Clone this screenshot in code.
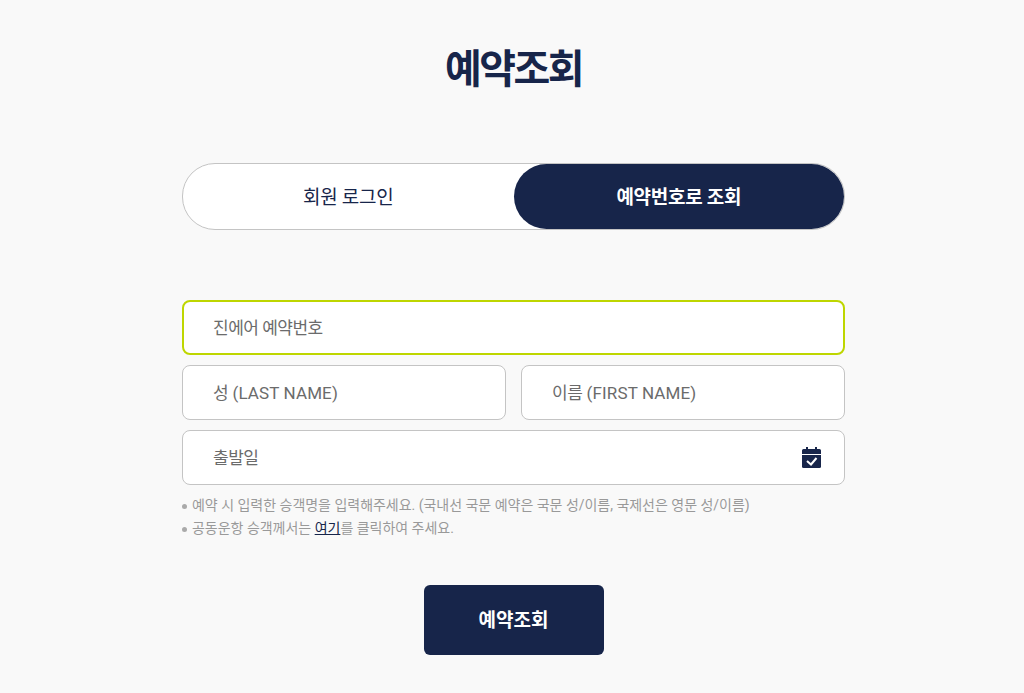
<script>
</script>

<main class="page">
  <h1>예약조회</h1>
  <div class="tabs">
    <button class="tab">회원 로그인</button>
    <button class="tab on">예약번호로 조회</button>
  </div>
  <form class="form">
    <div class="field focus"><span class="ko">진에어 예약번호</span></div>
    <div class="row">
      <div class="field"><span class="en"><span class="ko">성</span> (LAST NAME)</span></div>
      <div class="field"><span class="en"><span class="ko">이름</span> (FIRST NAME)</span></div>
    </div>
    <div class="field date">
      <span class="ko">출발일</span>
      <svg width="19" height="21" viewBox="0 0 19 21">
        <path fill="#17254a" d="M4 0h2v2h7V0h2v2h2.500A1.500 1.500 0 0 1 19 3.500V7H0V3.500A1.500 1.500 0 0 1 1.500 2H4z"/>
        <path fill="#17254a" d="M0 8h19v11.500a1.500 1.500 0 0 1-1.500 1.500h-16A1.500 1.500 0 0 1 0 19.500z"/>
        <path fill="none" stroke="#fff" stroke-width="2" d="M5 14l4 3.500L14.500 11"/>
      </svg>
    </div>
  </form>
  <ul class="notes">
    <li>예약 시 입력한 승객명을 입력해주세요. (국내선 국문 예약은 국문 성/이름, 국제선은 영문 성/이름)</li>
    <li>공동운항 승객께서는 <a href="#top">여기</a>를 클릭하여 주세요.</li>
  </ul>
  <div class="actions"><button class="submit">예약조회</button></div>
</main>

<style>
  :global(body) { margin: 0; background: #f9f9f9; }
  .page { width: 663px; margin-left: 182px; padding-top: 42px; font-family: Roboto, "Noto Sans CJK KR", sans-serif; color: #17254a; }
  h1 { margin: 0 0 66px; text-align: center; font-size: 40px; line-height: 55px; font-weight: 700; letter-spacing: -2.5px; }
  .tabs { display: flex; height: 65px; border: 1px solid #c4c4c4; border-radius: 33px; background: #fff; }
  .tab { flex: 1; border: 0; padding: 0 0 2px; background: none; border-radius: 33px; font: inherit; font-size: 19px; letter-spacing: -0.3px; color: #17254a; }
  .tab.on { background: #17254a; color: #fff; font-weight: 700; }
  .form { margin-top: 70px; display: flex; flex-direction: column; gap: 10px; }
  .row { display: flex; gap: 15px; }
  .row .field { flex: 1; }
  .field { box-sizing: border-box; height: 55px; padding: 0 30px 2px; display: flex; align-items: center; justify-content: space-between; border: 1px solid #c4c4c4; border-radius: 8px; background: #fff; color: #6b6b6b; font-size: 17px; }
  .en { letter-spacing: 0.12px; }
  .ko { letter-spacing: -0.5px; }
  .field.focus { border: 2px solid #bed600; padding: 0 29px 2px; }
  .date svg { margin: 2px -7px 0 0; }
  .notes { list-style: none; margin: 9px 0 0; padding: 0; font-size: 14px; line-height: 23px; letter-spacing: -0.02px; color: #999; }
  .notes li { padding-left: 10px; position: relative; }
  .notes li::before { content: ""; position: absolute; left: 0; top: 10px; width: 5px; height: 5px; border-radius: 50%; background: #aaa; }
  .notes a { color: #17254a; }
  .actions { margin-top: 45px; display: flex; justify-content: center; }
  .submit { width: 180px; height: 70px; padding: 0 0 4px; border: 0; border-radius: 6px; background: #17254a; color: #fff; font: inherit; font-size: 19px; font-weight: 700; }
</style>
